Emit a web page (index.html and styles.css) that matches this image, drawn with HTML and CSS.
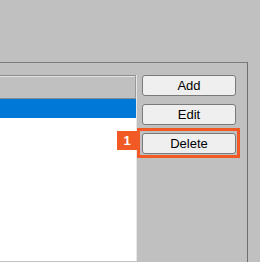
FILE: index.html
```html
<!DOCTYPE html>
<html lang="en">
<head>
    <meta charset="UTF-8">
    <title>List editor</title>
    <link rel="stylesheet" href="styles.css">
</head>
<body>
    <div class="group">
        <div class="list">
            <div class="list-header"></div>
            <div class="list-row selected"></div>
        </div>
        <div class="buttons">
            <button class="btn">Add</button>
            <button class="btn">Edit</button>
            <div class="callout">
                <span class="callout-ring"></span>
                <span class="callout-badge">1</span>
                <button class="btn">Delete</button>
            </div>
        </div>
    </div>
</body>
</html>
```

FILE: styles.css
```css
* {
    margin: 0;
    padding: 0;
    box-sizing: border-box;
}

html, body {
    width: 260px;
    height: 262px;
    overflow: hidden;
}

body {
    background: #c0c0c0;
    font-family: 'Liberation Sans', Arial, sans-serif;
    font-size: 13px;
    color: #000;
}

.group {
    margin-top: 62px;
    width: 248px;
    height: 200px;
    border-top: 1px solid #7c7c7c;
    border-right: 1px solid #6e6e6e;
    display: flex;
    gap: 5px;
    padding-top: 12px;
}

.list {
    width: 137px;
    height: 186px;
    background: #fff;
    border-right: 1px solid #e6e6e6;
    display: flex;
    flex-direction: column;
}

.list-header {
    height: 24px;
    background: #c0c0c0;
    border-top: 1px solid #8e8e8e;
    border-bottom: 1px solid #8a8a8a;
    border-right: 1px solid #9a9a9a;
    box-shadow: inset 0 1px 0 #e4e4e4;
}

.list-row {
    height: 19px;
}

.list-row.selected {
    background: #0078d7;
}

.buttons {
    display: flex;
    flex-direction: column;
    gap: 8px;
    width: 94px;
}

.btn {
    display: block;
    width: 94px;
    height: 21px;
    background: #efefef;
    border: 1px solid #7a7a7a;
    border-radius: 3px;
    font-family: inherit;
    font-size: 13px;
    color: #000;
    line-height: 19px;
    text-align: center;
}

.callout {
    position: relative;
}

.callout-ring {
    position: absolute;
    top: -5px;
    left: -5px;
    right: -4px;
    bottom: -4px;
    border: 3px solid #f15a24;
}

.callout-badge {
    position: absolute;
    top: -2px;
    left: -25px;
    width: 20px;
    height: 19px;
    background: #f15a24;
    color: #fff;
    font-weight: bold;
    font-size: 13px;
    line-height: 19px;
    text-align: center;
}
```
